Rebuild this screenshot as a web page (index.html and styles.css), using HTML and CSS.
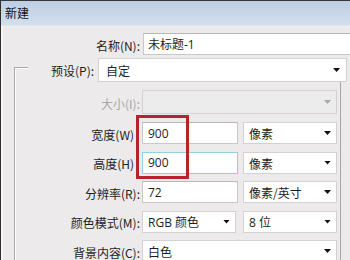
FILE: index.html
```html
<!DOCTYPE html>
<html lang="zh-CN">
<head>
    <meta charset="UTF-8">
    <title>新建</title>
    <link rel="stylesheet" href="styles.css">
</head>
<body>
    <div class="dialog">
        <div class="titlebar">新建</div>
        <div class="panel">
            <div class="row name-row">
                <label class="lbl name-lbl" for="docName">名称(N):</label>
                <input class="field name-field" id="docName" type="text" value="未标题-1">
            </div>

            <div class="group">
                <div class="preset">
                    <span class="preset-lbl">预设(P):</span>
                    <div class="select preset-sel">自定<span class="arrow"></span></div>
                </div>

                <div class="rows">
                    <div class="row size-row">
                        <span class="lbl disabled">大小(I):</span>
                        <div class="select full disabled-sel"><span class="arrow"></span></div>
                    </div>
                    <div class="row">
                        <label class="lbl cut" for="docWidth">宽度(W)</label>
                        <input class="field" id="docWidth" type="text" value="900">
                        <div class="select unit">像素<span class="arrow"></span></div>
                    </div>
                    <div class="row">
                        <label class="lbl cut" for="docHeight">高度(H)</label>
                        <input class="field focused" id="docHeight" type="text" value="900">
                        <div class="select unit">像素<span class="arrow"></span></div>
                    </div>
                    <div class="row">
                        <label class="lbl" for="docRes">分辨率(R):</label>
                        <input class="field" id="docRes" type="text" value="72">
                        <div class="select unit">像素/英寸<span class="arrow"></span></div>
                    </div>
                    <div class="row">
                        <span class="lbl">颜色模式(M):</span>
                        <div class="select mode">RGB 颜色<span class="arrow"></span></div>
                        <div class="select unit bits">8 位<span class="arrow"></span></div>
                    </div>
                    <div class="row">
                        <span class="lbl">背景内容(C):</span>
                        <div class="select full">白色<span class="arrow"></span></div>
                    </div>
                </div>
            </div>
        </div>

        <!-- red mark around width / height -->
        <div class="highlight"></div>
    </div>
</body>
</html>
```

FILE: styles.css
```css
body {
    margin: 0;
    font-family: "Noto Sans CJK SC", sans-serif;
    font-size: 12px;
    color: #1e1e1e;
}
.dialog {
    position: relative;
    width: 350px;
    height: 260px;
    overflow: hidden;
    box-sizing: border-box;
    border-top: 1px solid #3a3a3a;
    border-left: 1px solid #2e2e2e;
    background-color: #eceaeb;
    box-shadow: inset 2px 0 0 #f6f6f6;
}
.titlebar {
    height: 24px;
    line-height: 24px;
    padding-left: 4px;
    background: linear-gradient(#bccfe5, #d3dfec);
    border-bottom: 1px solid #e2e7ed;
    color: #111;
}
.panel {
    padding-top: 7px;
}
.row {
    display: flex;
    align-items: center;
    height: 22px;
}
.lbl {
    width: 125px;
    flex-shrink: 0;
    text-align: right;
    margin-right: 2px;
    padding-top: 2px;
    white-space: nowrap;
}
.lbl.cut {
    width: 119px;
    padding-right: 6px;
}
.lbl.disabled {
    color: #a8a6a7;
}
.name-lbl {
    width: 139px;
    margin-right: 3px;
}
.field {
    box-sizing: border-box;
    flex-shrink: 0;
    width: 96px;
    height: 22px;
    margin: 0;
    padding: 0 5px;
    font-family: "Open Sans", "Noto Sans CJK SC", sans-serif;
    font-size: 12px;
    color: #1e1e1e;
    background-color: #fff;
    border: 1px solid #c9c7c8;
    border-top-color: #b9b7b8;
    outline: none;
}
.field.focused {
    border-color: #92d0e2;
}
.name-field {
    width: 215px;
    padding-left: 4px;
}
.group {
    box-sizing: border-box;
    width: 327px;
    height: 210px;
    margin: 12px 0 0 13px;
    border: 1px solid #a9a7a8;
    box-shadow: inset 1px 1px 0 #fff;
}
.preset {
    display: flex;
    align-items: center;
    height: 24px;
    margin: -10px 0 0 13px;
}
.preset-lbl {
    flex-shrink: 0;
    height: 24px;
    line-height: 26px;
    padding: 0 4px 0 23px;
    white-space: nowrap;
    background-color: #eceaeb;
}
.select {
    position: relative;
    box-sizing: border-box;
    flex-shrink: 0;
    height: 22px;
    line-height: 22px;
    padding-left: 5px;
    background-color: #fff;
    border: 1px solid #d3d1d2;
    white-space: nowrap;
}
.select .arrow {
    position: absolute;
    right: 5px;
    top: 8px;
    width: 7px;
    height: 4px;
    background-color: #111;
    clip-path: polygon(0 0, 100% 0, 50% 100%);
}
.preset-sel {
    width: 249px;
    height: 24px;
    line-height: 24px;
    padding-left: 7px;
}
.preset-sel .arrow {
    right: 6px;
    top: 9px;
}
.rows {
    display: flex;
    flex-direction: column;
    gap: 7.5px;
    margin-top: 8px;
}
.size-row {
    height: 24px;
    margin-bottom: 0.5px;
}
.full {
    width: 195px;
}
.disabled-sel {
    height: 24px;
    background-color: #ececec;
}
.disabled-sel .arrow {
    background-color: #aaa;
    top: 9px;
}
.unit {
    width: 94px;
    margin-left: 5px;
}
.mode {
    width: 94px;
    font-family: "Open Sans", "Noto Sans CJK SC", sans-serif;
}
.bits {
    margin-left: 7px;
    font-family: "Open Sans", "Noto Sans CJK SC", sans-serif;
}
.highlight {
    position: absolute;
    left: 135px;
    top: 114px;
    width: 47px;
    height: 58px;
    border: 3px solid #b0262c;
}
```
